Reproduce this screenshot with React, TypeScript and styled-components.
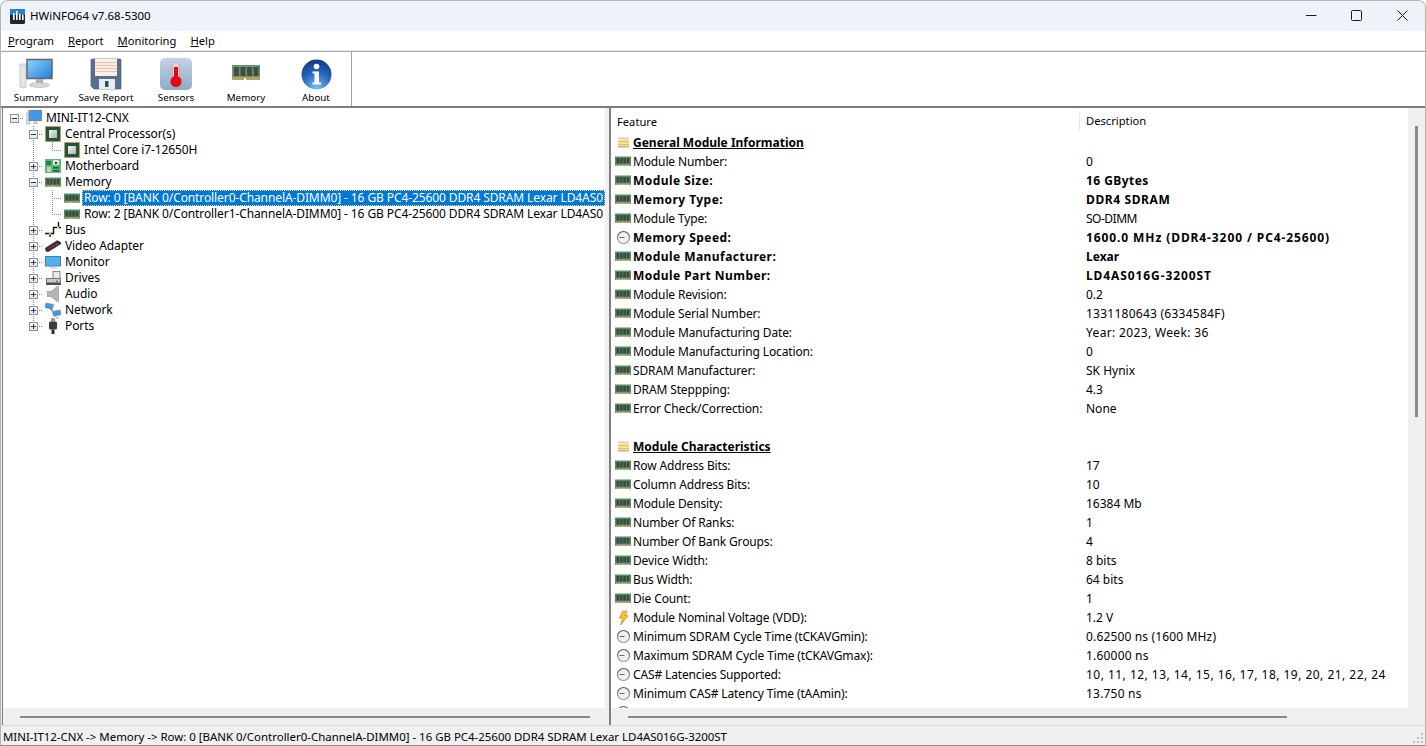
import styled, { createGlobalStyle } from "styled-components";
import type { ReactNode } from "react";

const UI_FONT = `"Noto Sans", "Liberation Sans", sans-serif`;

const GlobalStyle = createGlobalStyle`
  html, body {
    margin: 0;
    padding: 0;
    background: #fff;
    overflow: hidden;
  }
  * {
    box-sizing: border-box;
  }
`;

const Window = styled.div`
  width: 1426px;
  height: 746px;
  display: flex;
  flex-direction: column;
  border: 1px solid #b4b4b4;
  border-bottom-color: #8c8c8c;
  border-radius: 8px 8px 0 0;
  overflow: hidden;
  background: #f0f0f0;
  font-family: ${UI_FONT};
  font-size: 12px;
  color: #000;
`;

const TitleBar = styled.div`
  height: 30px;
  flex: none;
  display: flex;
  align-items: center;
  padding-left: 9px;
  background: #eef3f9;
  font-size: 11.5px;
`;

const TitleText = styled.span`
  margin-left: 5px;
  margin-bottom: 2px;
  flex: 1;
`;

const WindowButton = styled.div`
  width: 45px;
  height: 30px;
  display: flex;
  align-items: center;
  justify-content: center;
  margin-bottom: 1px;

  &:last-child {
    width: 46px;
  }
`;

const MenuBar = styled.div`
  height: 21px;
  flex: none;
  display: flex;
  align-items: center;
  gap: 14px;
  padding: 0 0 1px 7px;
  background: #fff;
  border-bottom: 1px solid #a3a3a3;
  box-shadow: inset 0 -1px 0 #f0f0f0;
  font-size: 11.2px;
`;

const Toolbar = styled.div`
  height: 56px;
  flex: none;
  display: flex;
  background: #fff;
  border-bottom: 2px solid #7d7d7d;
`;

const ToolGroup = styled.div`
  display: flex;
  width: 351px;
  border-right: 1px solid #a0a0a0;
`;

const ToolButton = styled.div`
  width: 70px;
  display: flex;
  flex-direction: column;
  align-items: center;
  padding-top: 5px;
  font-size: 9.8px;
`;

const ToolIcon = styled.div`
  height: 34px;
  display: flex;
  align-items: center;
  justify-content: center;
`;

const ToolLabel = styled.span`
  white-space: nowrap;
`;

const Body = styled.div`
  flex: 1;
  min-height: 0;
  display: flex;
  padding-left: 1px;
`;

const TreePane = styled.div`
  width: 603px;
  display: flex;
  flex-direction: column;
  border-left: 1px solid #808080;
`;

const TreeList = styled.div`
  flex: 1;
  min-height: 0;
  padding: 2px 0 0 0;
  background: #fff;
  overflow: hidden;
`;

const TreeRowBox = styled.div`
  height: 16px;
  display: flex;
  align-items: center;
  padding-left: 2px;
  white-space: nowrap;
`;

const GuideCell = styled.div<{ $up?: boolean; $down?: boolean; $stub?: boolean }>`
  width: 19px;
  height: 16px;
  flex: none;
  position: relative;
  background-repeat: no-repeat;
  background-image:
    ${(p) => (p.$up ? "repeating-linear-gradient(#888 0 1px, transparent 1px 2px)" : "none")},
    ${(p) => (p.$down ? "repeating-linear-gradient(#888 0 1px, transparent 1px 2px)" : "none")},
    ${(p) => (p.$stub ? "repeating-linear-gradient(90deg, #888 0 1px, transparent 1px 2px)" : "none")};
  background-size: 1px 8px, 1px 8px, 12px 1px;
  background-position: 9px 0, 9px 8px, 9px 8px;
`;

const Toggle = styled.div`
  position: absolute;
  left: 5px;
  top: 4px;
  width: 9px;
  height: 9px;
  border: 1px solid #919191;
  background: linear-gradient(#fff, #e4e4e4);
  font-size: 0;

  &::before {
    content: "";
    position: absolute;
    left: 1px;
    top: 3px;
    width: 5px;
    height: 1px;
    background: #1d3a70;
  }
`;

const TogglePlus = styled(Toggle)`
  &::after {
    content: "";
    position: absolute;
    left: 3px;
    top: 1px;
    width: 1px;
    height: 5px;
    background: #1d3a70;
  }
`;

const TreeIconSlot = styled.div`
  width: 16px;
  height: 16px;
  flex: none;
  margin-left: 2px;
  margin-right: 4px;
  display: flex;
  align-items: center;
  justify-content: center;
`;

const TreeLabel = styled.span<{ $selected?: boolean }>`
  flex: 1;
  min-width: 0;
  height: 16px;
  line-height: 15px;
  letter-spacing: -0.1px;
  margin-left: ${(p) => (p.$selected ? "-2px" : "0")};
  padding-left: ${(p) => (p.$selected ? "2px" : "0")};
  overflow: hidden;
  background: ${(p) => (p.$selected ? "#0078d7" : "transparent")};
  color: ${(p) => (p.$selected ? "#fff" : "#000")};
  outline: ${(p) => (p.$selected ? "1px dotted #ffd27a" : "none")};
  outline-offset: -1px;
`;

const HScrollTrack = styled.div`
  height: 17px;
  flex: none;
  display: flex;
  align-items: center;
  background: #f0f0f0;
`;

const HScrollThumb = styled.div<{ $start: number; $width: number }>`
  height: 2px;
  margin-left: ${(p) => p.$start}px;
  width: ${(p) => p.$width}px;
  background: #8a8a8a;
`;

const Splitter = styled.div`
  width: 4px;
  flex: none;
`;

const DetailPane = styled.div`
  flex: 1;
  min-width: 0;
  display: flex;
  flex-direction: column;
  border-left: 2px solid #808080;
`;

const DetailTop = styled.div`
  flex: 1;
  min-height: 0;
  display: flex;
`;

const DetailList = styled.div`
  flex: 1;
  min-width: 0;
  padding-top: 1px;
  background: #fff;
  border-bottom-right-radius: 3px;
  overflow: hidden;
`;

const HeaderRow = styled.div`
  height: 24px;
  display: flex;
  align-items: center;
  padding-left: 6px;
  font-size: 11.2px;
`;

const HeaderFeature = styled.div`
  width: 462px;
`;

const HeaderDescription = styled.div`
  flex: 1;
  height: 20px;
  line-height: 20px;
  padding-left: 6px;
  border-left: 1px solid #e5e5e5;
`;

const DataRow = styled.div<{ $bold?: boolean }>`
  height: 19px;
  display: flex;
  align-items: center;
  white-space: nowrap;
  font-weight: ${(p) => (p.$bold ? 700 : 400)};
`;

const RowIcon = styled.div`
  width: 16px;
  height: 16px;
  flex: none;
  margin: 0 2px 0 4px;
  display: flex;
  align-items: center;
  justify-content: center;
`;

const FeatureCell = styled.div<{ $bold?: boolean }>`
  width: 453px;
  flex: none;
  letter-spacing: ${(p) => (p.$bold ? "0.45px" : "-0.14px")};
`;

const ValueCell = styled.span<{ $tracking: number }>`
  letter-spacing: ${(p) => p.$tracking}px;
`;

const SectionTitle = styled.span`
  font-size: 12px;
  font-weight: 700;
  text-decoration: underline;
`;

const VScrollTrack = styled.div`
  width: 17px;
  flex: none;
  display: flex;
  justify-content: center;
  background: #f0f0f0;
`;

const VScrollThumb = styled.div`
  width: 3px;
  height: 291px;
  margin-top: 18px;
  background: #8a8a8a;
`;

const StatusBar = styled.div`
  height: 20px;
  flex: none;
  display: flex;
  align-items: center;
  justify-content: space-between;
  padding-left: 2px;
  padding-top: 1px;
  border-top: 1px solid #d9d9d9;
  white-space: nowrap;
  font-size: 11.45px;
`;

const Grip = styled.svg`
  align-self: flex-end;
  margin: 0 1px 1px 0;
`;

/* small icons */

const RamIcon = () => (
  <svg width="16" height="11" viewBox="0 0 16 11">
    <rect x="0" y="0.5" width="16" height="9.500" fill="#4f8f68" />
    <rect x="1.5" y="2" width="2.6" height="5.500" fill="#45473f" />
    <rect x="4.9" y="2" width="2.6" height="5.500" fill="#45473f" />
    <rect x="8.3" y="2" width="2.6" height="5.500" fill="#45473f" />
    <rect x="11.7" y="2" width="2.6" height="5.500" fill="#45473f" />
    <rect x="0.5" y="8.500" width="15" height="1.500" fill="#b3a878" />
    <rect x="7" y="9.500" width="1" height="1" fill="#fff" />
  </svg>
);

const ClockIcon = () => (
  <svg width="15" height="15" viewBox="0 0 15 15">
    <defs>
      <linearGradient id="clockRim" x1="0" y1="0" x2="0" y2="1">
        <stop offset="0" stopColor="#5f5f5f" />
        <stop offset="1" stopColor="#a8a8a8" />
      </linearGradient>
    </defs>
    <circle cx="7.5" cy="7.5" r="6" fill="#f1f1f1" stroke="url(#clockRim)" strokeWidth="1.200" />
    <path d="M3.500 7.500h5" stroke="#6a6a6a" strokeWidth="1" />
  </svg>
);

const BoltIcon = () => (
  <svg width="11" height="16" viewBox="0 0 12 16">
    <path d="M5 .5h5L7.6 5.5H11L3 15.5 5 8H1.6z" fill="#f7c52e" stroke="#c9821a" strokeWidth=".8" />
  </svg>
);

const SectionIcon = () => (
  <svg width="11" height="11" viewBox="0 0 11 11">
    <rect x="0" y="0.5" width="11" height="2" fill="#d9d2a8" />
    <rect x="0" y="3.5" width="11" height="2" fill="#e6c65a" />
    <rect x="0" y="6.5" width="11" height="2" fill="#e8bc45" />
    <rect x="0" y="9" width="11" height="1.5" fill="#c7b58a" />
  </svg>
);

const CpuIcon = () => (
  <svg width="16" height="16" viewBox="0 0 16 16">
    <defs>
      <linearGradient id="cpuCore" x1="0" y1="0" x2="1" y2="1">
        <stop offset="0" stopColor="#eef2ef" />
        <stop offset="1" stopColor="#a9b8ae" />
      </linearGradient>
    </defs>
    <rect x="0.5" y="0.5" width="15" height="15" fill="#24543a" stroke="#c49a45" strokeDasharray="1 1" />
    <rect x="4" y="4" width="8" height="8" fill="url(#cpuCore)" />
  </svg>
);

const BoardIcon = () => (
  <svg width="16" height="14" viewBox="0 0 16 14">
    <rect width="16" height="14" fill="#5fb47a" />
    <rect x="1" y="2" width="5" height="4" fill="#2d7d46" />
    <rect x="8" y="1" width="6" height="5" fill="#d6e4d9" />
    <rect x="10" y="3" width="2" height="2" fill="#333" />
    <rect x="2" y="8" width="4" height="5" fill="#b9d7c2" />
    <rect x="8" y="8" width="6" height="1.5" fill="#1f5c35" />
    <rect x="8" y="11" width="6" height="1.5" fill="#1f5c35" />
  </svg>
);

const ComputerIcon = () => (
  <svg width="16" height="16" viewBox="0 0 16 16">
    <rect x="0" y="3" width="4" height="11" fill="#d8dde2" stroke="#a9afb5" strokeWidth=".6" />
    <rect x="3" y="0.5" width="13" height="10" fill="#3f9be8" stroke="#7b8794" />
    <path d="M8 11h3l1 3H7z" fill="#c4c9ce" />
  </svg>
);

const BusIcon = () => (
  <svg width="16" height="16" viewBox="0 0 16 16">
    <path d="M0 11.500H8.500V5.500H16M5 11.500V15M13.500 0V5.500" fill="none" stroke="#111" strokeWidth="1.400" />
    <rect x="4" y="10.500" width="2" height="2" fill="#f2d92b" />
    <rect x="12" y="4.500" width="2" height="2" fill="#f2d92b" />
  </svg>
);

const VideoIcon = () => (
  <svg width="17" height="12" viewBox="0 0 17 12">
    <path d="M0 8 13 0l4 2v2L4 12H1z" fill="#3c3034" />
    <path d="M4 8l2-1 1 1-2 1zM7.500 6l2-1 1 1-2 1zM11 4l2-1 1 1-2 1z" fill="#c5343a" />
  </svg>
);

const MonitorIcon = () => (
  <svg width="16" height="13" viewBox="0 0 16 13">
    <rect x="0.500" y="0.500" width="15" height="9.500" fill="#4cb2f0" stroke="#4a7fa8" />
    <rect x="6" y="10" width="4" height="1.500" fill="#a9b4bd" />
    <rect x="4" y="11.500" width="8" height="1" fill="#c7ced4" />
  </svg>
);

const DriveIcon = () => (
  <svg width="15" height="15" viewBox="0 0 15 15">
    <rect x="7" y="0.500" width="7" height="7" fill="#e9e9e9" stroke="#888" />
    <rect x="0.500" y="7.500" width="14" height="6" fill="#c9c9c9" stroke="#777" />
    <rect x="0.500" y="11.500" width="14" height="2.500" fill="#4b4b4b" />
    <rect x="10" y="9.500" width="2" height="1.500" fill="#2faa43" />
  </svg>
);

const SpeakerIcon = () => (
  <svg width="12" height="16" viewBox="0 0 12 16">
    <path d="M0 5.500h4L10 .5h1.500v15H10L4 10.500H0z" fill="#b5b5b5" stroke="#8a8a8a" strokeWidth=".6" />
  </svg>
);

const NetworkIcon = () => (
  <svg width="17" height="17" viewBox="0 0 17 17">
    <path d="M4 5l4 4" stroke="#555" strokeWidth="1.200" />
    <path d="M1 .5l8 1.500-1 5-8-1.500z" fill="#3f97e0" stroke="#7a8a99" strokeWidth=".7" />
    <path d="M8 9.500l8-1.500 1 5-8 1.500z" fill="#3f97e0" stroke="#7a8a99" strokeWidth=".7" />
    <path d="M11 14.500l1.500 2h2" fill="none" stroke="#999" />
  </svg>
);

const PlugIcon = () => (
  <svg width="10" height="16" viewBox="0 0 10 16">
    <rect x="3" y="0" width="4" height="3.500" fill="#9a9a9a" />
    <rect x="1" y="3.500" width="8" height="8" rx="1.500" fill="#3b3b3b" />
    <rect x="3.500" y="11.500" width="3" height="4.500" fill="#2c2c2c" />
  </svg>
);

/* large toolbar icons */

const SummaryIcon = () => (
  <svg width="34" height="32" viewBox="0 0 34 32">
    <defs>
      <linearGradient id="sumScreen" x1="0" y1="0" x2="1" y2="1">
        <stop offset="0" stopColor="#8fd4f7" />
        <stop offset="1" stopColor="#1f7fdc" />
      </linearGradient>
    </defs>
    <path d="M1 6h6v23l-3 1-3-1z" fill="#e3e6e8" stroke="#a8adb2" strokeWidth=".6" />
    <rect x="8" y="1.500" width="25" height="19" fill="url(#sumScreen)" stroke="#5c6670" strokeWidth="1.500" />
    <path d="M17 21h7v4h-7z" fill="#aeb4b9" />
    <ellipse cx="20.500" cy="27" rx="10" ry="2.500" fill="#d4d8db" stroke="#a4a9ad" strokeWidth=".5" />
  </svg>
);

const SaveIcon = () => (
  <svg width="32" height="32" viewBox="0 0 32 32">
    <path d="M1 2a1 1 0 0 1 1-1h28a1 1 0 0 1 1 1v29H4l-3-3z" fill="#57708c" stroke="#3f5268" strokeWidth=".6" />
    <rect x="5" y="1" width="22" height="17" fill="#fbeee8" />
    <path d="M5 4.500h22M5 7.500h22M5 10.500h22M5 13.500h22" stroke="#f0bdb0" strokeWidth="1" />
    <rect x="9" y="21" width="16" height="10" fill="#e8edf1" />
    <rect x="15" y="23" width="3.500" height="6" fill="#3b4c60" />
  </svg>
);

const SensorIcon = () => (
  <svg width="32" height="32" viewBox="0 0 32 32">
    <defs>
      <linearGradient id="sensorBg" x1="0" y1="0" x2="0" y2="1">
        <stop offset="0" stopColor="#c3d4e6" />
        <stop offset="1" stopColor="#8eaac7" />
      </linearGradient>
    </defs>
    <rect x="0" y="0" width="32" height="32" rx="5" fill="url(#sensorBg)" />
    <rect x="13" y="4" width="6" height="20" rx="3" fill="#f6d9d5" stroke="#c98b88" strokeWidth=".5" />
    <rect x="14" y="9" width="4" height="14" fill="#e3060f" />
    <circle cx="16" cy="23.500" r="5.500" fill="#e3060f" />
  </svg>
);

const BigRamIcon = () => (
  <svg width="30" height="20" viewBox="0 0 30 20">
    <rect x="1" y="1" width="28" height="14" fill="#5f9a72" />
    <rect x="3" y="3" width="5" height="9" fill="#4a4c44" />
    <rect x="9.500" y="3" width="5" height="9" fill="#4a4c44" />
    <rect x="16" y="3" width="5" height="9" fill="#4a4c44" />
    <rect x="22.500" y="3" width="5" height="9" fill="#4a4c44" />
    <rect x="1" y="13" width="28" height="3" fill="#c2a05c" />
    <rect x="13" y="14" width="2" height="3" fill="#fff" />
  </svg>
);

const AboutIcon = () => (
  <svg width="31" height="31" viewBox="0 0 31 31">
    <defs>
      <radialGradient id="aboutBall" cx="0.5" cy="0.95" r="0.95">
        <stop offset="0" stopColor="#7fc0f2" />
        <stop offset="0.55" stopColor="#2467bb" />
        <stop offset="1" stopColor="#0f3a80" />
      </radialGradient>
    </defs>
    <circle cx="15.500" cy="15.500" r="15" fill="url(#aboutBall)" />
    <circle cx="15.500" cy="7.500" r="2.800" fill="#fff" />
    <path d="M11.500 12.500h6.500v11h2v2h-8.500v-2h2v-9h-2z" fill="#fff" />
  </svg>
);

const AppIcon = () => (
  <svg width="15" height="15" viewBox="0 0 15 15">
    <rect width="15" height="15" rx="1.500" fill="#24262b" />
    <rect y="0" width="15" height="6" rx="1.500" fill="#2a7fcf" />
    <rect x="3" y="4" width="1.600" height="7" fill="#fff" />
    <rect x="6" y="2" width="1.600" height="9" fill="#fff" />
    <rect x="9" y="5" width="1.600" height="6" fill="#fff" />
    <rect x="12" y="6" width="1.600" height="5" fill="#fff" />
  </svg>
);

type IconKind = "ram" | "clock" | "bolt";

const rowIcons: Record<IconKind, ReactNode> = {
  ram: <RamIcon />,
  clock: <ClockIcon />,
  bolt: <BoltIcon />,
};

type DetailItem =
  | { section: string }
  | { spacer: true }
  | { icon: IconKind; label: string; value: string; bold?: boolean; tracking?: number };

const details: DetailItem[] = [
  { section: "General Module Information" },
  { icon: "ram", label: "Module Number:", value: "0" },
  { icon: "ram", label: "Module Size:", value: "16 GBytes", bold: true, tracking: 0.45 },
  { icon: "ram", label: "Memory Type:", value: "DDR4 SDRAM", bold: true, tracking: 0.6 },
  { icon: "ram", label: "Module Type:", value: "SO-DIMM", tracking: -0.5 },
  { icon: "clock", label: "Memory Speed:", value: "1600.0 MHz (DDR4-3200 / PC4-25600)", bold: true, tracking: 0.9 },
  { icon: "ram", label: "Module Manufacturer:", value: "Lexar", bold: true },
  { icon: "ram", label: "Module Part Number:", value: "LD4AS016G-3200ST", bold: true, tracking: 0.9 },
  { icon: "ram", label: "Module Revision:", value: "0.2" },
  { icon: "ram", label: "Module Serial Number:", value: "1331180643 (6334584F)", tracking: 0.25 },
  { icon: "ram", label: "Module Manufacturing Date:", value: "Year: 2023, Week: 36", tracking: 0.35 },
  { icon: "ram", label: "Module Manufacturing Location:", value: "0" },
  { icon: "ram", label: "SDRAM Manufacturer:", value: "SK Hynix" },
  { icon: "ram", label: "DRAM Steppping:", value: "4.3" },
  { icon: "ram", label: "Error Check/Correction:", value: "None" },
  { spacer: true },
  { section: "Module Characteristics" },
  { icon: "ram", label: "Row Address Bits:", value: "17" },
  { icon: "ram", label: "Column Address Bits:", value: "10" },
  { icon: "ram", label: "Module Density:", value: "16384 Mb" },
  { icon: "ram", label: "Number Of Ranks:", value: "1" },
  { icon: "ram", label: "Number Of Bank Groups:", value: "4" },
  { icon: "ram", label: "Device Width:", value: "8 bits" },
  { icon: "ram", label: "Bus Width:", value: "64 bits" },
  { icon: "ram", label: "Die Count:", value: "1" },
  { icon: "bolt", label: "Module Nominal Voltage (VDD):", value: "1.2 V" },
  { icon: "clock", label: "Minimum SDRAM Cycle Time (tCKAVGmin):", value: "0.62500 ns (1600 MHz)", tracking: 0.15 },
  { icon: "clock", label: "Maximum SDRAM Cycle Time (tCKAVGmax):", value: "1.60000 ns", tracking: 0.2 },
  {
    icon: "clock",
    label: "CAS# Latencies Supported:",
    value: "10, 11, 12, 13, 14, 15, 16, 17, 18, 19, 20, 21, 22, 24",
    tracking: 0.47,
  },
  { icon: "clock", label: "Minimum CAS# Latency Time (tAAmin):", value: "13.750 ns", tracking: 0.2 },
  { icon: "clock", label: "", value: "" },
];

const RAM_NAME = "16 GB PC4-25600 DDR4 SDRAM Lexar LD4AS016G-3200ST";
const RAM_NAME_CUT = "16 GB PC4-25600 DDR4 SDRAM Lexar LD4AS0";

type Guide = { up?: boolean; down?: boolean; stub?: boolean; toggle?: "plus" | "minus" };

type TreeItem = { guides: Guide[]; icon: ReactNode; label: string; selected?: boolean };

const through: Guide = { up: true, down: true };
const open = (last = false): Guide => ({ up: true, down: !last, stub: true, toggle: "minus" });
const closed = (last = false): Guide => ({ up: true, down: !last, stub: true, toggle: "plus" });

const tree: TreeItem[] = [
  { guides: [{ stub: true, toggle: "minus" }], icon: <ComputerIcon />, label: "MINI-IT12-CNX" },
  { guides: [{}, open()], icon: <CpuIcon />, label: "Central Processor(s)" },
  { guides: [{}, through, { up: true, stub: true }], icon: <CpuIcon />, label: "Intel Core i7-12650H" },
  { guides: [{}, closed()], icon: <BoardIcon />, label: "Motherboard" },
  { guides: [{}, open()], icon: <RamIcon />, label: "Memory" },
  {
    guides: [{}, through, { up: true, down: true, stub: true }],
    icon: <RamIcon />,
    label: `Row: 0 [BANK 0/Controller0-ChannelA-DIMM0] - ${RAM_NAME_CUT}`,
    selected: true,
  },
  {
    guides: [{}, through, { up: true, stub: true }],
    icon: <RamIcon />,
    label: `Row: 2 [BANK 0/Controller1-ChannelA-DIMM0] - ${RAM_NAME_CUT}`,
  },
  { guides: [{}, closed()], icon: <BusIcon />, label: "Bus" },
  { guides: [{}, closed()], icon: <VideoIcon />, label: "Video Adapter" },
  { guides: [{}, closed()], icon: <MonitorIcon />, label: "Monitor" },
  { guides: [{}, closed()], icon: <DriveIcon />, label: "Drives" },
  { guides: [{}, closed()], icon: <SpeakerIcon />, label: "Audio" },
  { guides: [{}, closed()], icon: <NetworkIcon />, label: "Network" },
  { guides: [{}, closed(true)], icon: <PlugIcon />, label: "Ports" },
];

const tools = [
  { label: "Summary", icon: <SummaryIcon /> },
  { label: "Save Report", icon: <SaveIcon /> },
  { label: "Sensors", icon: <SensorIcon /> },
  { label: "Memory", icon: <BigRamIcon /> },
  { label: "About", icon: <AboutIcon /> },
];

const menus = [
  ["P", "rogram"],
  ["R", "eport"],
  ["M", "onitoring"],
  ["H", "elp"],
];

const App = () => {
  return (
    <>
      <GlobalStyle />
      <Window>
        <TitleBar>
          <AppIcon />
          <TitleText>HWiNFO64 v7.68-5300</TitleText>
          <WindowButton>
            <svg width="11" height="11" viewBox="0 0 11 11">
              <path d="M0 5.500h10.500" stroke="#1a1a1a" />
            </svg>
          </WindowButton>
          <WindowButton>
            <svg width="11" height="11" viewBox="0 0 11 11">
              <rect x="0.500" y="0.500" width="10" height="10" rx="1" fill="none" stroke="#1a1a1a" />
            </svg>
          </WindowButton>
          <WindowButton>
            <svg width="11" height="11" viewBox="0 0 11 11">
              <path d="M.5.500l10 10M10.500.500l-10 10" stroke="#1a1a1a" />
            </svg>
          </WindowButton>
        </TitleBar>
        <MenuBar>
          {menus.map(([first, rest]) => (
            <span key={first}>
              <u>{first}</u>
              {rest}
            </span>
          ))}
        </MenuBar>
        <Toolbar>
          <ToolGroup>
            {tools.map((tool) => (
              <ToolButton key={tool.label}>
                <ToolIcon>{tool.icon}</ToolIcon>
                <ToolLabel>{tool.label}</ToolLabel>
              </ToolButton>
            ))}
          </ToolGroup>
        </Toolbar>
        <Body>
          <TreePane>
            <TreeList>
              {tree.map((item) => (
                <TreeRowBox key={item.label}>
                  {item.guides.map((g, i) => (
                    <GuideCell key={i} $up={g.up} $down={g.down} $stub={g.stub}>
                      {g.toggle === "plus" && <TogglePlus />}
                      {g.toggle === "minus" && <Toggle />}
                    </GuideCell>
                  ))}
                  <TreeIconSlot>{item.icon}</TreeIconSlot>
                  <TreeLabel $selected={item.selected}>{item.label}</TreeLabel>
                </TreeRowBox>
              ))}
            </TreeList>
            <HScrollTrack>
              <HScrollThumb $start={17} $width={570} />
            </HScrollTrack>
          </TreePane>
          <Splitter />
          <DetailPane>
            <DetailTop>
              <DetailList>
                <HeaderRow>
                  <HeaderFeature>Feature</HeaderFeature>
                  <HeaderDescription>Description</HeaderDescription>
                </HeaderRow>
                {details.map((item, i) => {
                  if ("spacer" in item) return <DataRow key={i} />;
                  if ("section" in item)
                    return (
                      <DataRow key={i}>
                        <RowIcon>
                          <SectionIcon />
                        </RowIcon>
                        <SectionTitle>{item.section}</SectionTitle>
                      </DataRow>
                    );
                  return (
                    <DataRow key={i} $bold={item.bold}>
                      <RowIcon>{rowIcons[item.icon]}</RowIcon>
                      <FeatureCell $bold={item.bold}>{item.label}</FeatureCell>
                      <ValueCell $tracking={item.tracking ?? 0}>{item.value}</ValueCell>
                    </DataRow>
                  );
                })}
              </DetailList>
              <VScrollTrack>
                <VScrollThumb />
              </VScrollTrack>
            </DetailTop>
            <HScrollTrack>
              <HScrollThumb $start={17} $width={659} />
            </HScrollTrack>
          </DetailPane>
        </Body>
        <StatusBar>
          <span>MINI-IT12-CNX -&gt; Memory -&gt; Row: 0 [BANK 0/Controller0-ChannelA-DIMM0] - {RAM_NAME}</span>
          <Grip width="11" height="11" viewBox="0 0 11 11">
            <path d="M8 0h2v2H8zM4 4h2v2H4zM8 4h2v2H8zM0 8h2v2H0zM4 8h2v2H4zM8 8h2v2H8z" fill="#bdbdbd" />
          </Grip>
        </StatusBar>
      </Window>
    </>
  );
};

export default App;
